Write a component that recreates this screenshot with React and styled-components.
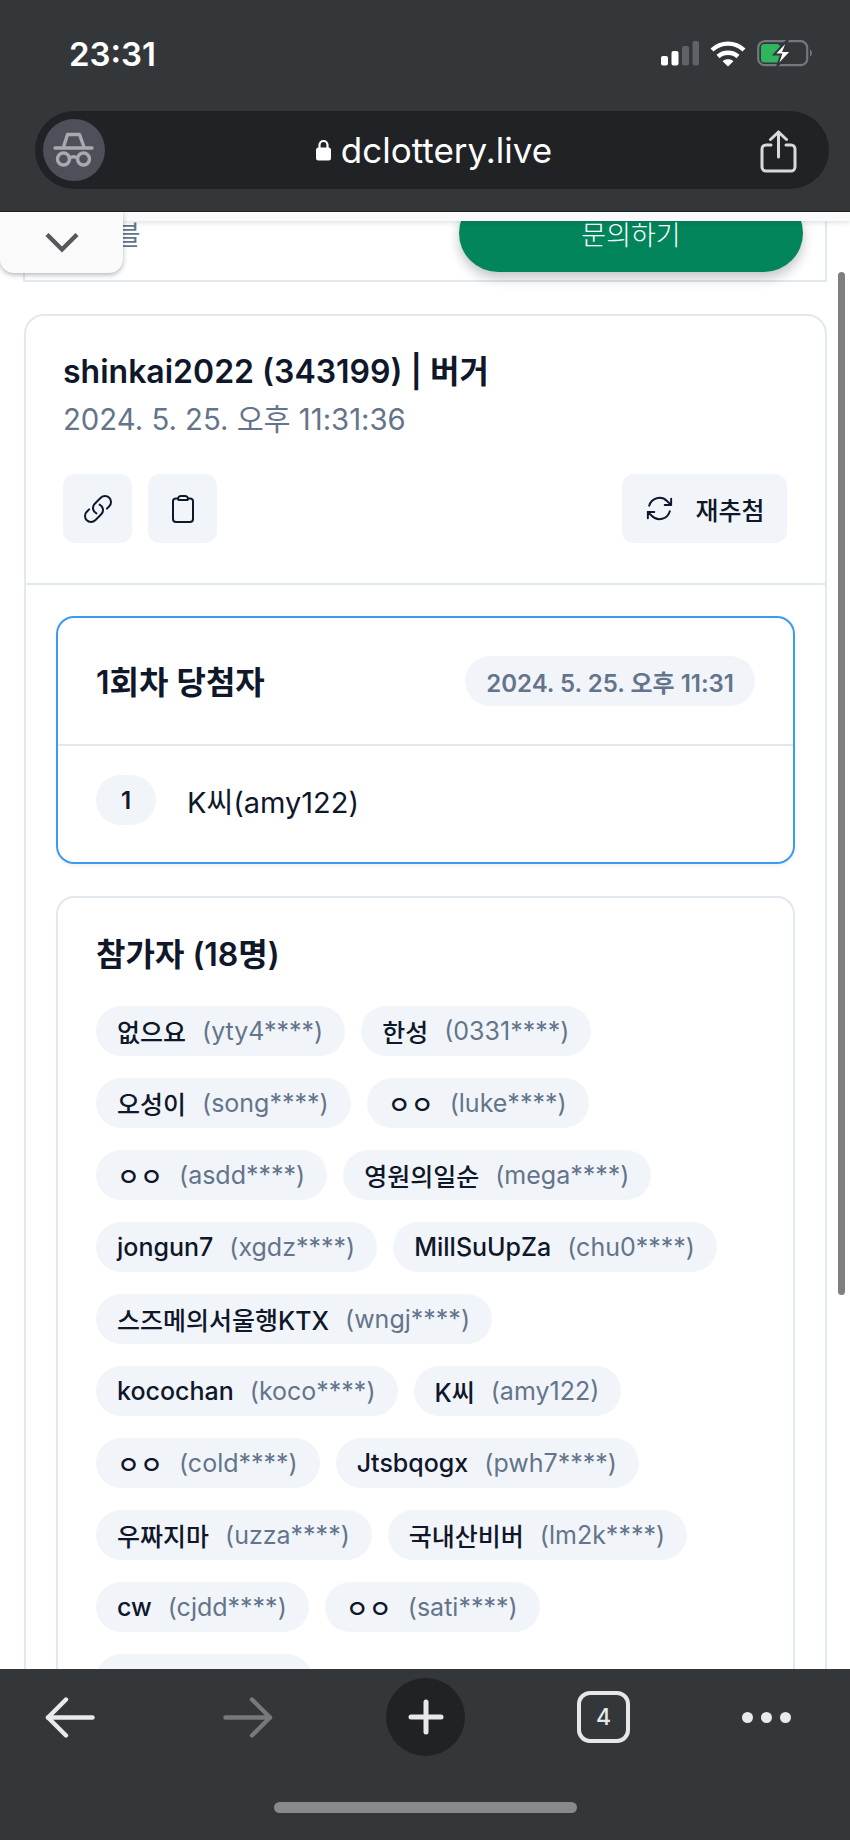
import React from "react";
import styled, { createGlobalStyle } from "styled-components";
import { HiOutlineLink, HiOutlineClipboard, HiOutlineArrowPath } from "react-icons/hi2";

const GlobalStyle = createGlobalStyle`
  html, body { margin: 0; padding: 0; background: #fff; }
  * { box-sizing: border-box; }
  body { font-family: Inter, "Noto Sans CJK KR", sans-serif; color: #0f172a; }
`;

const participants = [
  ["없으요", "yty4****"],
  ["한성", "0331****"],
  ["오성이", "song****"],
  ["ㅇㅇ", "luke****"],
  ["ㅇㅇ", "asdd****"],
  ["영원의일순", "mega****"],
  ["jongun7", "xgdz****"],
  ["MillSuUpZa", "chu0****"],
  ["스즈메의서울행KTX", "wngj****"],
  ["kocochan", "koco****"],
  ["K씨", "amy122"],
  ["ㅇㅇ", "cold****"],
  ["Jtsbqogx", "pwh7****"],
  ["우짜지마", "uzza****"],
  ["국내산비버", "lm2k****"],
  ["cw", "cjdd****"],
  ["ㅇㅇ", "sati****"],
  ["씨앗", "seo****"],
];

const App = () => {
  return (
    <Phone>
      <GlobalStyle />
      <TopBar>
        <StatusRow>
          <Clock>23:31</Clock>
          <StatusIcons>
            <svg width="38" height="25" viewBox="0 0 38 25">
              <rect x="0" y="15" width="7" height="9.5" rx="2" fill="#fff" />
              <rect x="10.5" y="10" width="7" height="14.5" rx="2" fill="#fff" />
              <rect x="21" y="5" width="7" height="19.5" rx="2" fill="#5f6268" />
              <rect x="31.5" y="0" width="6.5" height="24.5" rx="2" fill="#5f6268" />
            </svg>
            <svg width="36" height="27" viewBox="0 0 36 27" fill="none" stroke="#fff" strokeWidth="4.4">
              <path d="M2 10 C11 1.5 25 1.5 34 10" />
              <path d="M8 16.5 C13.5 11.5 22.5 11.5 28 16.5" />
              <path d="M18 26.5 L12.6 21.2 C15.6 18.6 20.4 18.6 23.4 21.2 Z" fill="#fff" stroke="none" />
            </svg>
            <svg width="57" height="28" viewBox="0 0 57 28">
              <rect x="1.2" y="2.2" width="49" height="24" rx="6.5" fill="none" stroke="#74777b" strokeWidth="2.2" />
              <rect x="4" y="5" width="19" height="18.5" rx="3.5" fill="#2fb560" />
              <path d="M53 10.5 C55.5 11.5 55.5 16.5 53 17.5 Z" fill="#74777b" />
              <path d="M31 0.5 L17 15.5 H24 L20 27.5 L34.5 12 H26.5 Z" fill="#fff" stroke="#33373a" strokeWidth="2" />
            </svg>
          </StatusIcons>
        </StatusRow>
        <UrlBar>
          <IncognitoBadge>
            <svg width="62" height="62" viewBox="0 0 62 62" fill="none" stroke="#a7abb1" strokeWidth="3.4">
              <path d="M12 29 H49" strokeLinecap="round" />
              <path d="M20.5 28 L24.5 15.5 H36.5 L41 28" strokeLinejoin="round" />
              <circle cx="20.5" cy="40" r="6" />
              <circle cx="40.5" cy="40" r="6" />
              <path d="M26.5 39 Q30.5 36.5 34.5 39" />
            </svg>
          </IncognitoBadge>
          <Address>
            <svg width="15" height="22" viewBox="0 0 15 22">
              <path d="M3.5 9 V6 a4 4 0 0 1 8 0 V9" fill="none" stroke="#fff" strokeWidth="2.2" />
              <rect x="0" y="8.5" width="15" height="13" rx="2.5" fill="#fff" />
            </svg>
            <span>dclottery.live</span>
          </Address>
          <ShareButton>
            <svg width="37" height="43" viewBox="0 0 37 43" fill="none" stroke="#d7d9dd" strokeWidth="3" strokeLinecap="round" strokeLinejoin="round">
              <path d="M11 15 H6 a4 4 0 0 0 -4 4 V37 a4 4 0 0 0 4 4 H31 a4 4 0 0 0 4 -4 V19 a4 4 0 0 0 -4 -4 H26" />
              <path d="M18.5 27 V2" />
              <path d="M10.5 9.5 L18.5 2 L26.5 9.5" />
            </svg>
          </ShareButton>
        </UrlBar>
      </TopBar>

      <Viewport>
        <StickyStrip />
        <CollapseTab>
          <svg width="34" height="21" viewBox="0 0 34 21" fill="none" stroke="#55585d" strokeWidth="4.4">
            <path d="M2 2.5 L17 17.5 L32 2.5" />
          </svg>
        </CollapseTab>
        <ScrollThumb />

        <NoticeCard>
          <NoticeLabel>테이블</NoticeLabel>
          <ContactButton>문의하기</ContactButton>
        </NoticeCard>

        <MainCard>
          <MainHeader>
            <MainTitle>shinkai2022 (343199) | 버거</MainTitle>
            <MainDate>2024. 5. 25. 오후 11:31:36</MainDate>
            <Actions>
              <IconButton>
                <HiOutlineLink size={32} />
              </IconButton>
              <IconButton>
                <HiOutlineClipboard size={32} />
              </IconButton>
              <RedrawButton>
                <HiOutlineArrowPath size={31} />
                재추첨
              </RedrawButton>
            </Actions>
          </MainHeader>
          <MainBody>
            <WinnerCard>
              <WinnerHeader>
                <SectionTitle>1회차 당첨자</SectionTitle>
                <DatePill>2024. 5. 25. 오후 11:31</DatePill>
              </WinnerHeader>
              <WinnerRow>
                <RankPill>1</RankPill>
                <WinnerName>K씨(amy122)</WinnerName>
              </WinnerRow>
            </WinnerCard>
            <ParticipantCard>
              <SectionTitle>참가자 (18명)</SectionTitle>
              <ChipList>
                {participants.map(([name, id], index) => (
                  <Chip key={index + id}>
                    <ChipName>{name}</ChipName>
                    <ChipId>({id})</ChipId>
                  </Chip>
                ))}
              </ChipList>
            </ParticipantCard>
          </MainBody>
        </MainCard>
      </Viewport>

      <BottomBar>
        <NavRow>
          <NavArrow>
            <svg width="50" height="41" viewBox="0 0 50 41" fill="none" stroke="#e8eaec" strokeWidth="4.4" strokeLinecap="round" strokeLinejoin="round">
              <path d="M47.5 20.5 H3" />
              <path d="M21 2.5 L3 20.5 L21 38.5" />
            </svg>
          </NavArrow>
          <NavItem>
            <svg width="50" height="41" viewBox="0 0 50 41" fill="none" stroke="#77797c" strokeWidth="4.4" strokeLinecap="round" strokeLinejoin="round">
              <path d="M2.5 20.5 H47" />
              <path d="M29 2.5 L47 20.5 L29 38.5" />
            </svg>
          </NavItem>
          <NewTabButton>
            <svg width="36" height="36" viewBox="0 0 36 36" fill="none" stroke="#e8e8e8" strokeWidth="5" strokeLinecap="round">
              <path d="M18 3 V33" />
              <path d="M3 18 H33" />
            </svg>
          </NewTabButton>
          <TabCount>4</TabCount>
          <MoreDots>
            <span />
            <span />
            <span />
          </MoreDots>
        </NavRow>
        <HomeIndicator />
      </BottomBar>
    </Phone>
  );
};

export default App;

const Phone = styled.div`
  width: 850px;
  height: 1840px;
  display: flex;
  flex-direction: column;
  overflow: hidden;
  position: relative;
  background: #fff;
`;

const TopBar = styled.header`
  height: 212px;
  flex: none;
  background: #33373a;
  border-bottom: 1px solid #1f2124;
  padding: 0 21px;
  position: relative;
  z-index: 3;
`;

const StatusRow = styled.div`
  height: 111px;
  display: flex;
  justify-content: space-between;
  align-items: flex-start;
  padding: 34px 15px 0 48px;
`;

const Clock = styled.div`
  font-family: Inter, sans-serif;
  font-size: 33px;
  font-weight: 600;
  line-height: 40px;
  color: #fff;
`;

const StatusIcons = styled.div`
  display: flex;
  align-items: center;
  gap: 11px;
  padding-top: 5px;
`;

const UrlBar = styled.div`
  height: 78px;
  margin-left: 14px;
  border-radius: 39px;
  background: #212226;
  display: grid;
  grid-template-columns: 1fr auto 1fr;
  align-items: center;
  padding: 0 32px 0 8px;
`;

const IncognitoBadge = styled.div`
  width: 62px;
  height: 62px;
  border-radius: 50%;
  background: #4d5058;
`;

const Address = styled.div`
  display: flex;
  align-items: center;
  gap: 10px;
  padding-left: 28px;
  font-family: Inter, sans-serif;
  font-size: 35px;
  line-height: 44px;
  color: #fff;
`;

const ShareButton = styled.div`
  justify-self: end;
  display: flex;
  padding-top: 2px;
`;

const Viewport = styled.main`
  flex: 1;
  min-height: 0;
  overflow: hidden;
  position: relative;
  padding: 0 23px 0 24px;
`;

const StickyStrip = styled.div`
  position: absolute;
  top: 0;
  left: 0;
  right: 0;
  height: 9px;
  background: #fafafa;
  box-shadow: 0 2px 5px rgba(15, 23, 42, 0.12);
  z-index: 2;
`;

const CollapseTab = styled.div`
  position: absolute;
  top: 0;
  left: 0;
  width: 123px;
  height: 61px;
  background: #fafafa;
  border-radius: 0 0 14px 14px;
  box-shadow: 0 2px 5px rgba(15, 23, 42, 0.3);
  display: flex;
  justify-content: center;
  align-items: flex-end;
  padding: 0 0 20px 0;
  z-index: 2;
`;

const ScrollThumb = styled.div`
  position: absolute;
  top: 60px;
  left: 838px;
  width: 6.5px;
  height: 1023px;
  border-radius: 4px;
  background: #7f7f82;
  z-index: 2;
`;

const NoticeCard = styled.section`
  height: 70px;
  margin-left: -1px;
  border: solid #e2e8f0;
  border-width: 0 2px 2px 2px;
  display: flex;
  justify-content: space-between;
  align-items: flex-end;
  padding: 0 22px 8px 0;
`;

const NoticeLabel = styled.div`
  align-self: flex-start;
  padding: 9px 0 0 41px;
  font-size: 27px;
  line-height: 30px;
  color: #64748b;
`;

const ContactButton = styled.div`
  width: 344px;
  height: 78px;
  flex: none;
  border-radius: 39px;
  background: #03855c;
  box-shadow: 0 6px 12px rgba(15, 23, 42, 0.25);
  display: flex;
  justify-content: center;
  align-items: center;
  font-size: 27px;
  font-weight: 300;
  color: #fff;
`;

const MainCard = styled.section`
  margin-top: 32px;
  border: 2px solid #e2e8f0;
  border-radius: 20px;
  width: 803px;
`;

const MainHeader = styled.div`
  padding: 36px 38px 40px 37px;
  border-bottom: 2px solid #e2e8f0;
`;

const MainTitle = styled.h1`
  margin: 0;
  font-size: 32px;
  font-weight: 600;
  line-height: 40px;
  color: #0f172a;
`;

const MainDate = styled.div`
  margin-top: 8px;
  font-size: 29.3px;
  line-height: 40px;
  color: #64748b;
`;

const Actions = styled.div`
  margin-top: 34px;
  display: flex;
  gap: 16px;
`;

const IconButton = styled.div`
  width: 69px;
  height: 69px;
  border-radius: 12px;
  background: #f1f5f9;
  display: flex;
  justify-content: center;
  align-items: center;
`;

const RedrawButton = styled.div`
  width: 165px;
  height: 69px;
  margin-left: auto;
  border-radius: 12px;
  background: #f1f5f9;
  display: flex;
  justify-content: center;
  align-items: center;
  gap: 20px;
  font-size: 25px;
  font-weight: 500;
`;

const MainBody = styled.div`
  padding: 31px 30px 0;
  display: flex;
  flex-direction: column;
  gap: 32px;
`;

const WinnerCard = styled.div`
  border: 2px solid #3b9bf0;
  border-radius: 18px;
  box-shadow: 0 2px 4px rgba(15, 23, 42, 0.06);
`;

const WinnerHeader = styled.div`
  height: 128px;
  padding: 0 38px;
  display: flex;
  justify-content: space-between;
  align-items: center;
  border-bottom: 2px solid #e2e8f0;
`;

const SectionTitle = styled.h2`
  margin: 0;
  font-size: 32px;
  font-weight: 600;
  line-height: 40px;
  color: #0f172a;

  ${WinnerHeader} & {
    padding-top: 4px;
  }
`;

const DatePill = styled.div`
  height: 50px;
  padding: 0 21px;
  border-radius: 25px;
  background: #f1f5f9;
  display: flex;
  align-items: center;
  font-size: 24px;
  font-weight: 600;
  color: #64748b;
`;

const WinnerRow = styled.div`
  height: 116px;
  padding: 0 38px 8px;
  display: flex;
  align-items: center;
  gap: 31px;
`;

const RankPill = styled.div`
  width: 60px;
  height: 50px;
  border-radius: 25px;
  background: #f1f5f9;
  display: flex;
  justify-content: center;
  align-items: center;
  font-size: 24px;
  font-weight: 600;
`;

const WinnerName = styled.div`
  font-size: 29px;
`;

const ParticipantCard = styled.div`
  border: 2px solid #e2e8f0;
  border-radius: 18px;
  padding: 37px 37px 40px 38px;
`;

const ChipList = styled.div`
  margin-top: 31px;
  display: flex;
  flex-wrap: wrap;
  gap: 22px 16px;
`;

const Chip = styled.div`
  height: 50px;
  padding: 0 22px 0 21px;
  border-radius: 25px;
  background: #f1f5f9;
  display: flex;
  align-items: center;
  gap: 16px;
  font-size: 25px;
  white-space: nowrap;
`;

const ChipName = styled.span`
  font-weight: 500;
  color: #0f172a;
`;

const ChipId = styled.span`
  color: #64748b;
`;

const BottomBar = styled.footer`
  height: 171px;
  flex: none;
  background: #33373a;
  position: relative;
  z-index: 3;
  padding: 9px 0 0 45px;
`;

const NavRow = styled.nav`
  height: 78px;
  display: flex;
  align-items: center;
  gap: 112px;
`;

const NavItem = styled.div`
  display: flex;
  flex: none;
`;

const NavArrow = styled(NavItem)`
  margin-right: 16px;
`;

const NewTabButton = styled.div`
  width: 79px;
  height: 78px;
  flex: none;
  margin-left: 1px;
  border-radius: 50%;
  background: #212226;
  display: flex;
  justify-content: center;
  align-items: center;
`;

const TabCount = styled.div`
  width: 53px;
  height: 52px;
  flex: none;
  border: 4px solid #e6e7e8;
  border-radius: 13px;
  display: flex;
  justify-content: center;
  align-items: center;
  font-family: Inter, sans-serif;
  font-size: 23px;
  font-weight: 500;
  color: #e6e7e8;
`;

const MoreDots = styled.div`
  display: flex;
  gap: 8px;

  span {
    width: 11px;
    height: 11px;
    border-radius: 50%;
    background: #e8eaec;
  }
`;

const HomeIndicator = styled.div`
  width: 303px;
  height: 11px;
  margin: 46px 0 0 229px;
  border-radius: 6px;
  background: #88898a;
`;
